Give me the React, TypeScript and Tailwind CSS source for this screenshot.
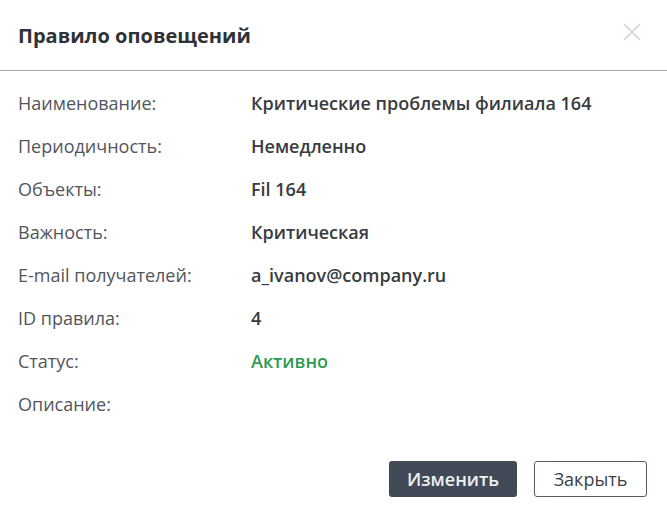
import { X } from 'lucide-react';

const rows: { label: string; value: string; green?: boolean }[] = [
  { label: 'Наименование:', value: 'Критические проблемы филиала 164' },
  { label: 'Периодичность:', value: 'Немедленно' },
  { label: 'Объекты:', value: 'Fil 164' },
  { label: 'Важность:', value: 'Критическая' },
  { label: 'E-mail получателей:', value: 'a_ivanov@company.ru' },
  { label: 'ID правила:', value: '4' },
  { label: 'Статус:', value: 'Активно', green: true },
  { label: 'Описание:', value: '' },
];

export default function App() {
  return (
    <div className="w-[667px] h-[514px] bg-white flex flex-col font-['Open_Sans',sans-serif]">
      <div className="h-[71px] shrink-0 flex items-center justify-between pl-[18px] pr-[20px] border-b border-[#a2a3a8]">
        <h2 className="text-[20px] font-bold text-[#2f3237] leading-7 mt-[2px]">Правило оповещений</h2>
        <button className="text-[#d2d3d5] mb-[6px]">
          <X size={30} strokeWidth={1.4} />
        </button>
      </div>

      <div className="flex flex-col gap-[18px] pt-[20px] pl-[18px]">
        {rows.map((r) => (
          <div key={r.label} className="flex leading-[25px] text-[18px]">
            <div className="w-[233px] shrink-0 text-[#52555c]">{r.label}</div>
            <div className={r.green ? 'font-semibold text-[#2e9a4f]' : 'font-semibold text-[#383b40]'}>
              {r.value}
            </div>
          </div>
        ))}
      </div>

      <div className="flex justify-end gap-[17px] pr-[20px] mt-auto pb-[17px]">
        <button className="w-[128px] h-[36px] rounded-[3px] bg-[#434a57] text-[#eef0f3] text-[18px] font-semibold">
          Изменить
        </button>
        <button className="w-[113px] h-[36px] rounded-[3px] border border-[#555c69] bg-white text-[#3a3f48] text-[18px]">
          Закрыть
        </button>
      </div>
    </div>
  );
}
